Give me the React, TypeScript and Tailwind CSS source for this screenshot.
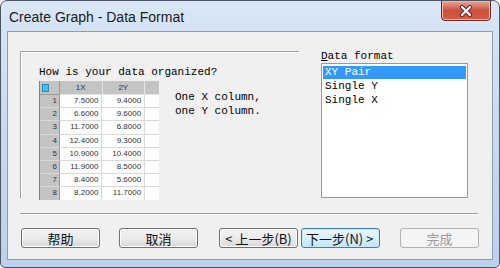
const rows = [
  ["7.5000", "9.4000"],
  ["6.6000", "9.6000"],
  ["11.7000", "6.8000"],
  ["12.4000", "9.3000"],
  ["10.9000", "10.4000"],
  ["11.9000", "8.5000"],
  ["8.4000", "5.6000"],
  ["8.2000", "11.7000"],
  ["", ""],
]

const mono = "font-['Liberation_Mono','DejaVu_Sans_Mono',monospace]"
const cjk = "font-['Noto_Sans_CJK_SC','Noto_Sans',sans-serif]"

function Btn({ label, kind = "normal", className = "" }: { label: string; kind?: "normal" | "default" | "disabled"; className?: string }) {
  const look =
    kind === "default"
      ? "border-[#3c7fb1] bg-gradient-to-b from-[#eaf6fd] via-[#d9f0fc] to-[#bee6fd] text-[#111] justify-start pl-[4px] shadow-[inset_0_0_0_1px_#c8e8f8]"
      : kind === "disabled"
        ? "border-[#adb2b5] bg-[#f4f4f4] text-[#9a9a9a] justify-center"
        : "border-[#707070] bg-gradient-to-b from-[#f2f2f2] via-[#ebebeb] to-[#d8d8d8] text-[#111] justify-center shadow-[inset_0_0_0_1px_#fcfcfc]"
  return (
    <div className={`h-[20px] w-[79px] flex items-center rounded-[3px] border text-[13px] leading-none ${cjk} ${look} ${className}`}>
      {label}
    </div>
  )
}

function DataTable() {
  return (
    <div className="w-[120px] h-[119px] overflow-hidden border-l border-[#808080] bg-white font-['Liberation_Sans',sans-serif] text-[8px] text-[#333]">
      <div className="flex h-[14px]">
        <div className="w-[20px] bg-[#c4c4c4] border-r border-b border-[#9a9a9a] flex items-center pl-[2px]">
          <div className="w-[7px] h-[8px] bg-[#40c0f0] border border-[#2a8ab8]" />
        </div>
        <div className="w-[43px] bg-[#c4c4c4] border-r border-b border-[#e4e4e4] flex items-center justify-center">1X</div>
        <div className="w-[43px] bg-[#c4c4c4] border-r border-b border-[#e4e4e4] flex items-center justify-center">2Y</div>
        <div className="w-[14px] bg-[#c4c4c4] border-b border-[#e4e4e4]" />
      </div>
      {rows.map((r, i) => (
        <div key={i} className="flex h-[13.2px]">
          <div className="w-[20px] bg-[#c4c4c4] border-r border-b border-[#9a9a9a] border-b-[#d8d8d8] flex items-center justify-end pr-[2px]">
            {r[0] ? i + 1 : ""}
          </div>
          <div className="w-[43px] border-r border-b border-[#dadada] flex items-center justify-end pr-[3px]">{r[0]}</div>
          <div className="w-[43px] border-r border-b border-[#dadada] flex items-center justify-end pr-[3px]">{r[1]}</div>
          <div className="w-[14px] border-b border-[#dadada]" />
        </div>
      ))}
    </div>
  )
}

export default function App() {
  return (
    <div className="w-[500px] h-[268px] flex flex-col rounded-t-[7px] rounded-b-[5px] border border-[#4b5563] bg-gradient-to-b from-[#d9e7f6] via-[#c6d9ef] to-[#bcd2ec] overflow-hidden">
      <div className="relative h-[30px] flex items-center pl-[8px]">
        <span className="font-['Liberation_Sans',Arial,sans-serif] text-[14px] text-[#1b1b1b] leading-none mt-[1px]">Create Graph - Data Format</span>
        <div className="absolute left-[440px] top-[-1px] w-[50px] h-[21px] rounded-b-[4px] border border-[#6b2a24] bg-gradient-to-b from-[#e7a898] via-[#c9503e] to-[#d65a40] flex items-center justify-center shadow-[inset_0_0_0_1px_#f0b6a6]">
          <svg width="14" height="12" viewBox="0 0 14 12">
            <path d="M3 2 L11 10 M11 2 L3 10" stroke="#5a2020" strokeWidth="4" strokeLinecap="round" />
            <path d="M3 2 L11 10 M11 2 L3 10" stroke="#ffffff" strokeWidth="2.4" strokeLinecap="round" />
          </svg>
        </div>
      </div>
      <div className="mx-[6px] mb-[7px] flex-1 border border-[#8b9db3] bg-[#f0f0f0] flex flex-col">
        <div className="flex items-start h-[166px]">
          <div className="ml-[12px] mt-[19px] w-[279px] h-[147px] border-l border-t border-[#a0a0a0] shadow-[inset_1px_1px_0_#ffffff] pl-[18px] pt-[13px]">
            <div className={`${mono} text-[11px] leading-[14px] text-black whitespace-pre`}>How is your data organized?</div>
            <div className="flex mt-[2px]">
              <DataTable />
              <div className={`${mono} text-[11px] leading-[14px] text-black ml-[16px] mt-[9px] whitespace-pre`}>
                <div>One X column,</div>
                <div>one Y column.</div>
              </div>
            </div>
          </div>
          <div className="ml-[22px] mt-[17px] flex flex-col">
            <div className={`${mono} text-[11px] leading-[14px] text-black whitespace-pre`}>
              <span className="underline">D</span>ata format
            </div>
            <div className="w-[147px] h-[135px] border border-[#9a9a9a] bg-white p-[1px] pt-[2px]">
              <div className={`${mono} text-[11px] leading-[13px] bg-[#3399ff] text-white pl-[2px] whitespace-pre`}>XY Pair</div>
              <div className={`${mono} text-[11px] leading-[14px] text-black pl-[2px] whitespace-pre`}>Single Y</div>
              <div className={`${mono} text-[11px] leading-[14px] text-black pl-[2px] whitespace-pre`}>Single X</div>
            </div>
          </div>
        </div>
        <div className="ml-[12px] mt-[15px] w-[458px] h-[2px] border-t border-[#a0a0a0] border-b border-b-white" />
        <div className="flex mt-[13px] ml-[13px]">
          <Btn label="帮助" />
          <Btn label="取消" className="ml-[19px]" />
          <Btn label="< 上一步(B)" className="ml-[21px] w-[78px]" />
          <Btn label="下一步(N) >" kind="default" className="ml-[3px]" />
          <Btn label="完成" kind="disabled" className="ml-[20px]" />
        </div>
      </div>
    </div>
  )
}
